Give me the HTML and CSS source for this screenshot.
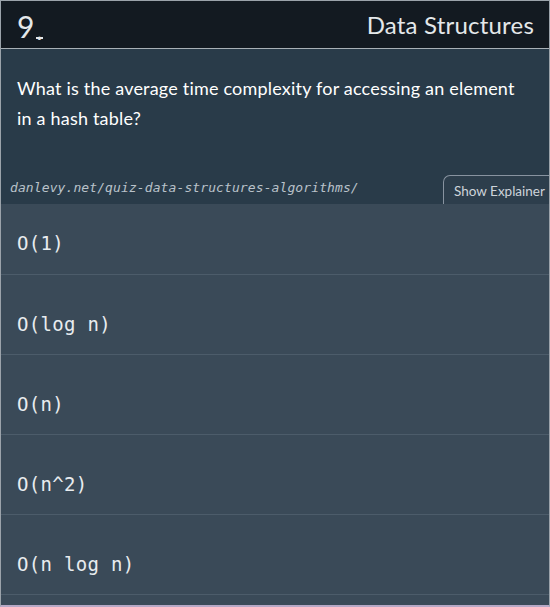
FILE: index.html
```html
<!DOCTYPE html>
<html>
<head>
<meta charset="utf-8">
<link rel="stylesheet" href="styles.css">
</head>
<body>
<div class="card">
  <header class="header">
    <div class="num">9<span class="dot">.</span></div>
    <div class="topic">Data Structures</div>
  </header>
  <section class="question">
    <p class="qtext">What is the average time complexity for accessing an element in a hash table?</p>
    <div class="meta">
      <span class="url">danlevy.net/quiz-data-structures-algorithms/</span>
      <span class="tab">Show Explainer</span>
    </div>
  </section>
  <ul class="options">
    <li class="option">O(1)</li>
    <li class="option">O(log n)</li>
    <li class="option">O(n)</li>
    <li class="option">O(n^2)</li>
    <li class="option">O(n log n)</li>
  </ul>
</div>
</body>
</html>
```
FILE: styles.css
```css
html, body {
  margin: 0;
  padding: 0;
  background: #3a4a58;
}
.card {
  width: 550px;
  height: 607px;
  box-sizing: border-box;
  border: 1px solid #9ba3aa;
  border-bottom: 2px solid #b6a8c6;
  background: #3a4a58;
  overflow: hidden;
  font-family: Lato, "Open Sans", sans-serif;
}
.header {
  height: 47px;
  background: #131a21;
  border-bottom: 1px solid #a8b0b6;
  display: flex;
  align-items: center;
  justify-content: space-between;
  padding: 0 15px 0 16px;
  color: #e4e8ea;
}
.num {
  font-size: 30px;
  font-weight: 400;
  line-height: 1;
  padding-top: 2px;
  letter-spacing: 0.5px;
  display: flex;
  align-items: flex-end;
}
.dot {
  display: block;
  font-size: 22px;
  font-weight: 700;
  line-height: 10px;
  height: 10px;
  width: 7px;
  text-align: center;
  margin: 0 0 2px 1px;
  border-bottom: 2px solid #e4e8ea;
  letter-spacing: 0;
  overflow: visible;
}
.topic {
  font-size: 24px;
  font-weight: 400;
  letter-spacing: 0.2px;
}
.question {
  background: #293b49;
  padding-top: 24px;
}
.qtext {
  margin: 0;
  padding: 0 18px 0 16px;
  font-size: 18px;
  line-height: 30px;
  letter-spacing: 0.2px;
  color: #ffffff;
  height: 102px;
}
.meta {
  display: flex;
  justify-content: space-between;
  align-items: flex-end;
  height: 29px;
}
.url {
  font-family: "DejaVu Sans Mono", monospace;
  font-style: italic;
  font-size: 13px;
  letter-spacing: 0.1px;
  color: #b9c2ca;
  padding-left: 9px;
  padding-bottom: 9px;
}
.tab {
  box-sizing: border-box;
  height: 29px;
  width: 106px;
  border: 1px solid #8893a0;
  border-bottom: none;
  border-right: none;
  border-top-left-radius: 7px;
  background: #2d3e4c;
  color: #cdd4da;
  font-size: 13.5px;
  padding: 7px 0 0 10px;
  white-space: nowrap;
}
.options {
  list-style: none;
  margin: 0;
  padding: 0;
}
.option {
  height: 80px;
  box-sizing: border-box;
  border-bottom: 1px solid #4c5c6a;
  padding: 38px 16px 0 16px;
  font-family: "DejaVu Sans Mono", monospace;
  font-size: 19px;
  line-height: 22px;
  letter-spacing: 0.3px;
  color: #e8ecef;
}
.option:first-child {
  height: 71px;
  padding-top: 28px;
}
```
